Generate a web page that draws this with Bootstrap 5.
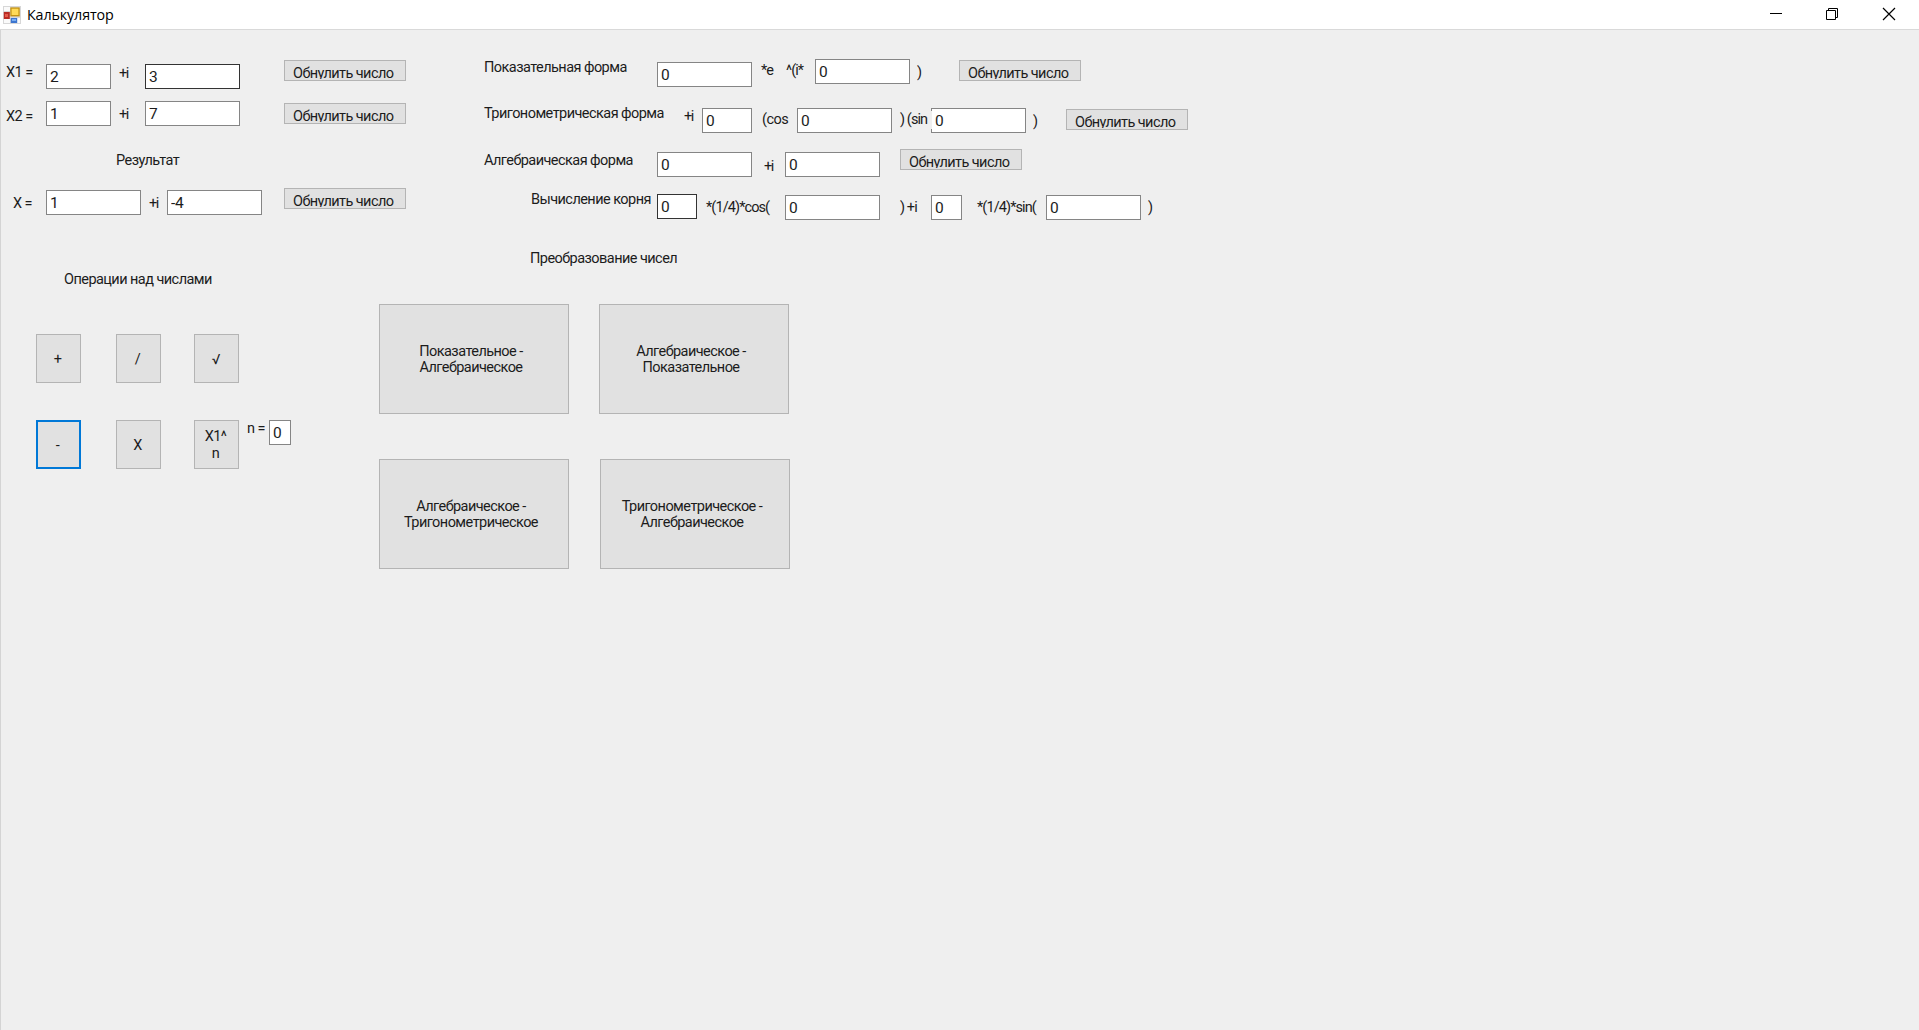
<!DOCTYPE html>
<html lang="ru">
<head>
<meta charset="utf-8">
<title>Калькулятор</title>
<link href="https://cdn.jsdelivr.net/npm/bootstrap@5.3.0/dist/css/bootstrap.min.css" rel="stylesheet">
<style>
body{background:#efefef;color:#1c1c1c;font:14.5px/18px Roboto,"Liberation Sans",sans-serif;letter-spacing:-.55px;height:1030px;overflow:hidden}
.titlebar{height:30px;border-bottom:1px solid #d9d9d9;padding-left:3px}
.titlebar .caption{font:14.3px/20px "Open Sans","Noto Sans",sans-serif;color:#000;margin-left:6px;letter-spacing:-.12px}
.client{border-left:1px solid #d4d4d4;height:1000px}
.upper{height:220px}
.side-a{width:469px;padding-top:30px}
.side-b{padding-top:29px}
.line{display:grid;align-items:start;justify-items:start}
.line>*{white-space:nowrap}
.l1{grid-template-columns:40px 73px 26px 139px auto;padding-left:5px;height:41px}
.l2{height:51px}
.result{height:36px;padding-left:115px}
.lx{grid-template-columns:33px 103px 18px 117px auto;padding-left:12px}
.r1{grid-template-columns:173px 104px 25px 29px 102px 42px auto;height:49px}
.r2{grid-template-columns:200px 18px 60px 35px 103px 31px 102px 33px auto;height:41px}
.r3{grid-template-columns:173px 107px 21px 115px auto;height:45px}
.r4{grid-template-columns:126px 49px 79px 115px 31px 46px 69px 102px auto;padding-left:47px}
.side-b .line{margin-left:14px}
.plus-i{letter-spacing:-1.5px}
.tight{letter-spacing:-.9px}
.form-control{height:25px;padding:0 3px;border:1px solid #858585;border-radius:0;background:#fff;color:#1c1c1c;font:15.5px/20px Roboto,"Liberation Sans",sans-serif;letter-spacing:-.3px;min-height:0}
.dark{border-color:#333}
.w22{width:22px}.w32{width:31px}.w40{width:40px}.w50{width:50px}.w65{width:65px}.w95{width:95px}
.btn{--bs-btn-border-color:#b4b4b4;--bs-btn-bg:#e1e1e1;--bs-btn-color:#1c1c1c;--bs-btn-border-radius:0;--bs-btn-padding-x:0;--bs-btn-padding-y:0;font:inherit;letter-spacing:-.55px;text-align:center}
.reset{width:122px;height:21px;padding:4px 0 0 8px;display:flex}
.reset span{height:14px;overflow:hidden;line-height:17px;letter-spacing:-.58px;padding-right:2px}
.op{width:45px;height:49px;line-height:17px;padding:1px 2px 0 0}
.op.focused{border:2px solid #0078d7}
.big{width:190px;height:110px;line-height:16px;padding:2px 6px 0 0}
.ml1{margin-left:1px}
.up3{margin-top:-3px}
.t1{margin-top:1px}.t2{margin-top:2px}.t3{margin-top:3px}.t4{margin-top:4px}.t5{margin-top:5px}.t6{margin-top:6px}.t7{margin-top:7px}.t9{margin-top:9px}
.over{background:#efefef;z-index:1;width:32px}
.ops{width:378px;padding-top:21px}
.ops-title{padding-left:63px}
.conv-title{padding-left:151px}
.opgrid{display:grid;grid-template-columns:80px 78px 53px 22px auto;row-gap:37px;padding:45px 0 0 35px;align-items:start}
.conv{grid-template-columns:220px auto;row-gap:45px;margin-top:36px}
</style>
<script src="https://cdn.jsdelivr.net/npm/bootstrap@5.3.0/dist/js/bootstrap.bundle.min.js"></script>
</head>
<body>
<header class="titlebar bg-white d-flex align-items-center">
  <svg width="18" height="18" viewBox="0 0 18 18"><rect width="18" height="18" fill="#d7d7d7"/><path d="M1 1h6v4H1zM1 13h6v4H1zM14 12h3v5h-3z" fill="#fafafa"/><rect x=".8" y="6" width="6" height="7" fill="#b92c24"/><rect x="2" y="8" width="3" height="3" fill="#e65b4c"/><rect x="7.3" y="1.4" width="9.4" height="9" fill="#c59311"/><rect x="8.6" y="2.7" width="6.8" height="6.3" fill="#ffdb58"/><rect x="7.8" y="12" width="6.4" height="5" fill="#3c75cf"/><rect x="9" y="13" width="4" height="2" fill="#79aef2"/></svg>
  <span class="caption">Калькулятор</span>
  <svg class="ms-auto" width="149" height="29" viewBox="1770 0 149 29" fill="none" stroke="#000" stroke-width="1"><path d="M1770 13.500h12M1826.500 10.500h9v9h-9zM1828.500 10v-1.500h9v9h-2"/><path d="M1883 8l12 12M1895 8l-12 12" stroke-width="1.2"/></svg>
</header>
<main class="client">
  <section class="upper d-flex">
    <div class="side-a">
      <div class="line l1"><span class="t4">X1 =</span><input class="form-control w65 t4" value="2"><span class="t5 plus-i">+i</span><input class="form-control dark w95 t4" value="3"><button class="btn reset"><span>Обнулить число</span></button></div>
      <div class="line l1 l2"><span class="t7">X2 =</span><input class="form-control w65" value="1"><span class="t5 plus-i">+i</span><input class="form-control w95" value="7"><button class="btn reset t2"><span>Обнулить число</span></button></div>
      <div class="result">Результат</div>
      <div class="line lx"><span class="t7">X =</span><input class="form-control w95 t2" value="1"><span class="t7 plus-i">+i</span><input class="form-control w95 t2" value="-4"><button class="btn reset"><span>Обнулить число</span></button></div>
    </div>
    <div class="side-b">
      <div class="line r1"><span>Показательная форма</span><input class="form-control w95 t3" value="0"><span class="t3 tight">*e</span><span class="t3 tight">^(i*</span><input class="form-control w95" value="0"><span class="t5">)</span><button class="btn reset t1"><span>Обнулить число</span></button></div>
      <div class="line r2"><span class="up3">Тригонометрическая форма</span><span class="plus-i">+i</span><input class="form-control w50" value="0"><span class="t3">(cos</span><input class="form-control w95" value="0"><span class="over tight t3">) (sin</span><input class="form-control w95" value="0"><span class="t5">)</span><button class="btn reset t1"><span>Обнулить число</span></button></div>
      <div class="line r3"><span class="t3">Алгебраическая форма</span><input class="form-control w95 t3" value="0"><span class="t9 plus-i">+i</span><input class="form-control w95 t3" value="0"><button class="btn reset"><span>Обнулить число</span></button></div>
      <div class="line r4"><span class="up3">Вычисление корня</span><input class="form-control dark w40" value="0"><span class="t5 tight">*(1/4)*cos(</span><input class="form-control w95 t1" value="0"><span class="t5 tight">) +i</span><input class="form-control w32 t1" value="0"><span class="t5 tight">*(1/4)*sin(</span><input class="form-control w95 t1" value="0"><span class="t5">)</span></div>
    </div>
  </section>
  <section class="d-flex">
    <div class="ops">
      <div class="ops-title">Операции над числами</div>
      <div class="opgrid"><button class="btn op">+</button><button class="btn op">/</button><button class="btn op">√</button><span></span><span></span>
      <button class="btn op focused">-</button><button class="btn op">X</button><button class="btn op">X1^<br>n</button><span>n =</span><input class="form-control w22" value="0"></div>
    </div>
    <div>
      <div class="conv-title">Преобразование чисел</div>
      <div class="line conv"><button class="btn big">Показательное -<br>Алгебраическое</button><button class="btn big">Алгебраическое -<br>Показательное</button><button class="btn big">Алгебраическое -<br>Тригонометрическое</button><button class="btn big ml1">Тригонометрическое -<br>Алгебраическое</button></div>
    </div>
  </section>
</main>
</body>
</html>
